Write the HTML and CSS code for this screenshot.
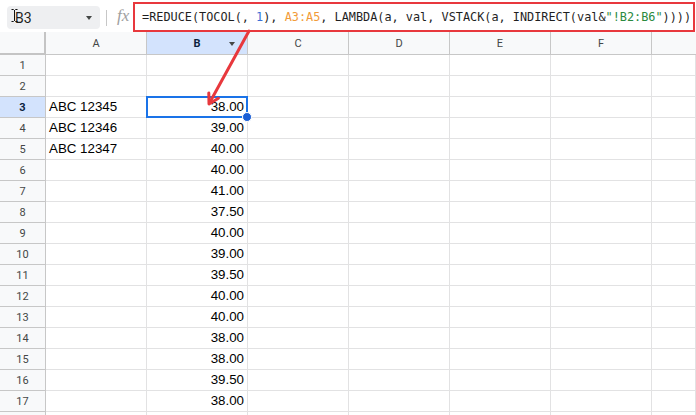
FILE: index.html
```html
<!DOCTYPE html>
<html>
<head>
<meta charset="utf-8">
<link rel="stylesheet" href="styles.css">
</head>
<body>
<div class="app">
  <div class="toolbar">
    <div class="namebox">
      <svg class="ibeam" width="7" height="13" viewBox="0 0 7 13"><path d="M0.5 0.5h2.2M4.3 0.5h2.2M3.5 1v11M0.5 12.5h2.2M4.3 12.5h2.2" stroke="#111" stroke-width="1" fill="none"/></svg>
      <span class="nb-text">B3</span>
      <span class="caret"></span>
    </div>
    <div class="divider"></div>
    <div class="fx">fx</div>
    <div class="formula"><span>=REDUCE(TOCOL(, </span><span class="f-num">1</span><span>), </span><span class="f-ref">A3:A5</span><span>, LAMBDA(a, val, VSTACK(a, INDIRECT(val&amp;</span><span class="f-str">"!B2:B6"</span><span>))))</span></div>
  </div>

  <div class="sheet">
    <div class="corner"></div>
    <div class="ch">A</div>
    <div class="ch ch-sel">B<span class="ch-caret"></span></div>
    <div class="ch">C</div>
    <div class="ch">D</div>
    <div class="ch">E</div>
    <div class="ch">F</div>
    <div class="ch ch-last"></div>

    <div class="rh">1</div><div class="c"></div><div class="c"></div><div class="c"></div><div class="c"></div><div class="c"></div><div class="c"></div><div class="c"></div>
    <div class="rh">2</div><div class="c"></div><div class="c"></div><div class="c"></div><div class="c"></div><div class="c"></div><div class="c"></div><div class="c"></div>
    <div class="rh rh-sel">3</div><div class="c">ABC 12345</div><div class="c num sel">38.00<span class="handle"></span></div><div class="c"></div><div class="c"></div><div class="c"></div><div class="c"></div><div class="c"></div>
    <div class="rh">4</div><div class="c">ABC 12346</div><div class="c num">39.00</div><div class="c"></div><div class="c"></div><div class="c"></div><div class="c"></div><div class="c"></div>
    <div class="rh">5</div><div class="c">ABC 12347</div><div class="c num">40.00</div><div class="c"></div><div class="c"></div><div class="c"></div><div class="c"></div><div class="c"></div>
    <div class="rh">6</div><div class="c"></div><div class="c num">40.00</div><div class="c"></div><div class="c"></div><div class="c"></div><div class="c"></div><div class="c"></div>
    <div class="rh">7</div><div class="c"></div><div class="c num">41.00</div><div class="c"></div><div class="c"></div><div class="c"></div><div class="c"></div><div class="c"></div>
    <div class="rh">8</div><div class="c"></div><div class="c num">37.50</div><div class="c"></div><div class="c"></div><div class="c"></div><div class="c"></div><div class="c"></div>
    <div class="rh">9</div><div class="c"></div><div class="c num">40.00</div><div class="c"></div><div class="c"></div><div class="c"></div><div class="c"></div><div class="c"></div>
    <div class="rh">10</div><div class="c"></div><div class="c num">39.00</div><div class="c"></div><div class="c"></div><div class="c"></div><div class="c"></div><div class="c"></div>
    <div class="rh">11</div><div class="c"></div><div class="c num">39.50</div><div class="c"></div><div class="c"></div><div class="c"></div><div class="c"></div><div class="c"></div>
    <div class="rh">12</div><div class="c"></div><div class="c num">40.00</div><div class="c"></div><div class="c"></div><div class="c"></div><div class="c"></div><div class="c"></div>
    <div class="rh">13</div><div class="c"></div><div class="c num">40.00</div><div class="c"></div><div class="c"></div><div class="c"></div><div class="c"></div><div class="c"></div>
    <div class="rh">14</div><div class="c"></div><div class="c num">38.00</div><div class="c"></div><div class="c"></div><div class="c"></div><div class="c"></div><div class="c"></div>
    <div class="rh">15</div><div class="c"></div><div class="c num">38.00</div><div class="c"></div><div class="c"></div><div class="c"></div><div class="c"></div><div class="c"></div>
    <div class="rh">16</div><div class="c"></div><div class="c num">39.50</div><div class="c"></div><div class="c"></div><div class="c"></div><div class="c"></div><div class="c"></div>
    <div class="rh">17</div><div class="c"></div><div class="c num">38.00</div><div class="c"></div><div class="c"></div><div class="c"></div><div class="c"></div><div class="c"></div>
    <div class="rh"></div><div class="c"></div><div class="c"></div><div class="c"></div><div class="c"></div><div class="c"></div><div class="c"></div><div class="c"></div>
  </div>

  <svg class="arrow" width="696" height="415" viewBox="0 0 696 415">
    <line x1="249" y1="31" x2="210" y2="102" stroke="#e8383d" stroke-width="3" stroke-linecap="round"/>
    <polyline points="208.8,93 209,104 218.4,98.3" fill="none" stroke="#e8383d" stroke-width="3" stroke-linecap="round" stroke-linejoin="round"/>
  </svg>
</div>
</body>
</html>
```

FILE: styles.css
```css
html, body {
  margin: 0;
  padding: 0;
}
body {
  width: 696px;
  height: 415px;
  overflow: hidden;
  background: #ffffff;
  font-family: "Liberation Sans", Arial, sans-serif;
  color: #000;
}
.app {
  position: relative;
  width: 696px;
  height: 415px;
  overflow: hidden;
}

/* toolbar */
.toolbar {
  display: flex;
  align-items: flex-start;
  height: 32px;
  background: #fff;
}
.namebox {
  position: relative;
  display: flex;
  align-items: center;
  margin: 6px 0 0 7px;
  width: 93px;
  height: 23px;
  box-sizing: border-box;
  padding-left: 8px;
  background: #eeeff1;
  border-radius: 4px;
}
.ibeam {
  position: absolute;
  left: 4px;
  top: 3px;
}
.nb-text {
  font-family: Roboto, "Liberation Sans", sans-serif;
  font-size: 14px;
  color: #1f1f1f;
}
.caret {
  margin-left: auto;
  margin-right: 8px;
  width: 0;
  height: 0;
  border-left: 3.5px solid transparent;
  border-right: 3.5px solid transparent;
  border-top: 4px solid #444746;
}
.divider {
  margin: 10px 0 0 6px;
  width: 1px;
  height: 16px;
  background: #c7c7c7;
}
.fx {
  margin: 7px 0 0 10px;
  width: 16px;
  font-family: "Liberation Serif", serif;
  font-style: italic;
  font-size: 17px;
  line-height: 18px;
  color: #a0a0a0;
}
.formula {
  flex: 1;
  margin: 2px 1px 0 0;
  height: 30px;
  box-sizing: border-box;
  border: 2px solid #e8383d;
  padding-left: 7px;
  font-family: "DejaVu Sans Mono", "Liberation Mono", monospace;
  font-size: 11.85px;
  line-height: 26px;
  color: #1f1f1f;
  white-space: nowrap;
  overflow: hidden;
  position: relative;
  z-index: 2;
}
.f-num { color: #3c6fd6; }
.f-ref { color: #f29b38; }
.f-str { color: #2a8a3e; }

/* sheet grid */
.sheet {
  display: grid;
  grid-template-columns: 46px repeat(6, 101px) 1fr;
  grid-template-rows: 23px repeat(18, 21px);
}
.sheet > div {
  box-sizing: border-box;
  min-width: 0;
}
.corner {
  background: #f8f9fa;
  border-right: 2px solid #c4c4c4;
  border-bottom: 2px solid #c4c4c4;
}
.ch {
  position: relative;
  background: #f8f9fa;
  border-right: 1px solid #c7c7c7;
  border-bottom: 1px solid #c7c7c7;
  font-family: Roboto, "Liberation Sans", sans-serif;
  font-size: 11px;
  color: #444746;
  display: flex;
  align-items: center;
  justify-content: center;
}
.ch-last { border-right: none; }
.ch-sel {
  background: #d3e3fd;
  color: #0b1f3f;
  font-weight: 700;
}
.ch-caret {
  position: absolute;
  right: 12px;
  top: 10px;
  width: 0;
  height: 0;
  border-left: 3.5px solid transparent;
  border-right: 3.5px solid transparent;
  border-top: 4px solid #444746;
}
.rh {
  background: #f8f9fa;
  border-right: 1px solid #c7c7c7;
  border-bottom: 1px solid #c7c7c7;
  font-family: Roboto, "Liberation Sans", sans-serif;
  font-size: 11px;
  color: #444746;
  display: flex;
  align-items: center;
  justify-content: center;
}
.rh-sel {
  background: #d3e3fd;
  color: #0b1f3f;
  font-weight: 700;
}
.c {
  position: relative;
  border-right: 1px solid #e2e2e3;
  border-bottom: 1px solid #e2e2e3;
  padding: 0 3px;
  font-size: 13.33px;
  line-height: 20px;
  white-space: nowrap;
  overflow: visible;
  color: #000;
}
.num { text-align: right; }
.sel::after {
  content: "";
  position: absolute;
  left: -1px;
  top: -1px;
  right: -1px;
  bottom: -1px;
  border: 2px solid #1a73e8;
}
.handle {
  position: absolute;
  right: -5px;
  bottom: -5px;
  width: 8px;
  height: 8px;
  border-radius: 50%;
  background: #1a5fd6;
  border: 1px solid #fff;
  z-index: 1;
}
.arrow {
  position: absolute;
  left: 0;
  top: 0;
  pointer-events: none;
  z-index: 3;
}
```
